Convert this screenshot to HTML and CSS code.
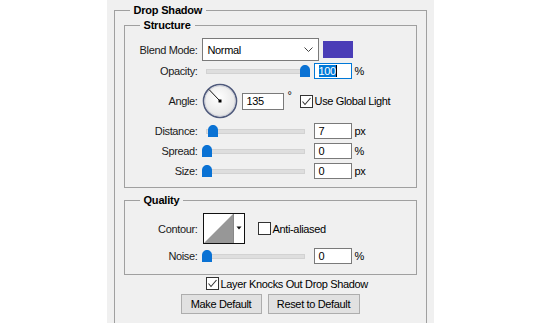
FILE: index.html
```html
<!DOCTYPE html>
<html lang="en">
<head>
    <meta charset="UTF-8">
    <meta name="viewport" content="width=device-width, initial-scale=1.0">
    <title>Layer Style - Drop Shadow</title>
    <link rel="stylesheet" href="styles.css">
</head>
<body>

<div class="panel">
    <fieldset class="group outer">
        <legend>Drop Shadow</legend>

        <!-- Structure -->
        <fieldset class="group">
            <legend>Structure</legend>

            <div class="row row-blend">
                <span class="label">Blend Mode:</span>
                <div class="select">
                    <span>Normal</span>
                    <svg class="chev" width="9" height="5" viewBox="0 0 9 5"><polyline points="0.5,0.5 4.5,4.5 8.5,0.5" fill="none" stroke="#444" stroke-width="1"/></svg>
                </div>
                <span class="swatch"></span>
            </div>

            <div class="row row-slider">
                <span class="label">Opacity:</span>
                <div class="slider">
                    <span class="track"></span>
                    <svg class="thumb" style="left: 98px" width="10" height="12" viewBox="0 0 10 12"><path d="M0 5 C0 2 2.5 0 5 0 C7.5 0 10 2 10 5 V12 H0 Z" fill="#0a72d4"/></svg>
                </div>
                <span class="field focused"><span class="selected">100</span><span class="caret"></span></span>
                <span class="unit">%</span>
            </div>

            <div class="row row-angle">
                <span class="label">Angle:</span>
                <svg class="dial" width="36" height="36" viewBox="0 0 36 36">
                    <defs>
                        <radialGradient id="dialFill" cx="45%" cy="40%" r="60%">
                            <stop offset="0%" stop-color="#ffffff"/>
                            <stop offset="100%" stop-color="#e4e4e4"/>
                        </radialGradient>
                    </defs>
                    <circle cx="18" cy="18" r="16.5" fill="url(#dialFill)" stroke="#4f5a7c" stroke-width="1.6"/>
                    <circle cx="18" cy="18" r="15.2" fill="none" stroke="#c9ccd6" stroke-width="0.8"/>
                    <line x1="18" y1="18" x2="7" y2="6.5" stroke="#111" stroke-width="1"/>
                    <rect x="16.5" y="16.5" width="3" height="3" fill="#000"/>
                </svg>
                <span class="field field-angle">135</span>
                <span class="degree">°</span>
                <label class="check check-global">
                    <svg width="13" height="13" viewBox="0 0 13 13"><rect x="0.5" y="0.5" width="12" height="12" fill="#fff" stroke="#333"/><polyline points="2.5,6.5 5,9.5 10.5,3" fill="none" stroke="#333" stroke-width="1.1"/></svg>
                    <span>Use Global Light</span>
                </label>
            </div>

            <div class="row row-slider">
                <span class="label">Distance:</span>
                <div class="slider">
                    <span class="track"></span>
                    <svg class="thumb" style="left: 6px" width="10" height="12" viewBox="0 0 10 12"><path d="M0 5 C0 2 2.5 0 5 0 C7.5 0 10 2 10 5 V12 H0 Z" fill="#0a72d4"/></svg>
                </div>
                <span class="field">7</span>
                <span class="unit">px</span>
            </div>

            <div class="row row-slider">
                <span class="label">Spread:</span>
                <div class="slider">
                    <span class="track"></span>
                    <svg class="thumb" style="left: 0px" width="10" height="12" viewBox="0 0 10 12"><path d="M0 5 C0 2 2.5 0 5 0 C7.5 0 10 2 10 5 V12 H0 Z" fill="#0a72d4"/></svg>
                </div>
                <span class="field">0</span>
                <span class="unit">%</span>
            </div>

            <div class="row row-slider">
                <span class="label">Size:</span>
                <div class="slider">
                    <span class="track"></span>
                    <svg class="thumb" style="left: 0px" width="10" height="12" viewBox="0 0 10 12"><path d="M0 5 C0 2 2.5 0 5 0 C7.5 0 10 2 10 5 V12 H0 Z" fill="#0a72d4"/></svg>
                </div>
                <span class="field">0</span>
                <span class="unit">px</span>
            </div>
        </fieldset>

        <!-- Quality -->
        <fieldset class="group quality">
            <legend>Quality</legend>

            <div class="row row-contour">
                <span class="label">Contour:</span>
                <svg class="contour" width="42" height="31" viewBox="0 0 42 31">
                    <rect x="0.5" y="0.5" width="41" height="30" fill="#fff" stroke="#111"/>
                    <polygon points="1,30 30,1 30,30" fill="#979797"/>
                    <line x1="30.5" y1="1" x2="30.5" y2="30" stroke="#888"/>
                    <polygon points="33.5,13.5 38.5,13.5 36,16.5" fill="#111"/>
                </svg>
                <label class="check check-anti">
                    <svg width="13" height="13" viewBox="0 0 13 13"><rect x="0.5" y="0.5" width="12" height="12" fill="#fff" stroke="#333"/></svg>
                    <span>Anti-aliased</span>
                </label>
            </div>

            <div class="row row-slider">
                <span class="label">Noise:</span>
                <div class="slider">
                    <span class="track"></span>
                    <svg class="thumb" style="left: 0px" width="10" height="12" viewBox="0 0 10 12"><path d="M0 5 C0 2 2.5 0 5 0 C7.5 0 10 2 10 5 V12 H0 Z" fill="#0a72d4"/></svg>
                </div>
                <span class="field">0</span>
                <span class="unit">%</span>
            </div>
        </fieldset>

        <label class="check check-knockout">
            <svg width="13" height="13" viewBox="0 0 13 13"><rect x="0.5" y="0.5" width="12" height="12" fill="#fff" stroke="#333"/><polyline points="2.5,6.5 5,9.5 10.5,3" fill="none" stroke="#333" stroke-width="1.1"/></svg>
            <span>Layer Knocks Out Drop Shadow</span>
        </label>

        <div class="buttons">
            <button class="btn btn-make">Make Default</button>
            <button class="btn btn-reset">Reset to Default</button>
        </div>
    </fieldset>
</div>

</body>
</html>
```

FILE: styles.css
```css
body {
    margin: 0;
    background-color: #ffffff;
    font-family: "Liberation Sans", Arial, sans-serif;
    font-size: 11px;
    letter-spacing: -0.35px;
    color: #1a1a1a;
}

.panel {
    width: 327px;
    height: 323px;
    margin: 0 auto;
    padding: 3px 7px 0;
    box-sizing: border-box;
    background-color: #f0f0f0;
    overflow: hidden;
}

/* group boxes */
.group {
    margin: 0;
    padding: 0 0 8px;
    min-width: 0;
    border: 1px solid #a0a0a0;
}

.group legend {
    margin-left: 15px;
    padding: 0 4px;
    font-weight: bold;
    line-height: 14px;
    letter-spacing: -0.2px;
    color: #000;
}

.outer {
    padding: 1px 9px 0;
    border-bottom: none;
    height: 400px;
}

.outer > legend {
    margin-left: 6px;
}

.quality {
    margin-top: 5px;
    padding-bottom: 10px;
}

/* rows */
.row {
    display: flex;
    align-items: center;
    gap: 4px;
    margin-top: 4px;
}

.label {
    width: 73px;
    text-align: right;
    flex: none;
}

.row-blend {
    height: 23px;
    margin-top: 6px;
}

.row-blend + .row {
    margin-top: 2px;
}

.row-slider {
    height: 16px;
}

.row-angle {
    height: 36px;
}

.row-contour {
    height: 31px;
    margin-top: 6px;
}

/* blend select */
.select {
    width: 117px;
    height: 23px;
    box-sizing: border-box;
    display: flex;
    align-items: center;
    justify-content: space-between;
    padding: 0 5px 0 5px;
    background-color: #fff;
    border: 1px solid #7a7a7a;
    color: #000;
}

.swatch {
    width: 30px;
    height: 17px;
    background-color: #4a3db7;
}

/* sliders */
.slider {
    position: relative;
    width: 108px;
    height: 16px;
    display: flex;
    align-items: center;
    flex: none;
}

.track {
    flex: 1;
    height: 3px;
    margin: 1px 5px 0 4px;
    background-color: #dedede;
    border: 1px solid #d2d2d2;
}

.thumb {
    position: absolute;
    top: 2px;
}

/* number fields */
.field {
    width: 38px;
    height: 16px;
    box-sizing: border-box;
    padding-left: 4px;
    line-height: 14px;
    background-color: #fff;
    border: 1px solid #7a7a7a;
    color: #000;
    display: flex;
    align-items: center;
    flex: none;
}

.field-angle {
    width: 42px;
    height: 17px;
    line-height: 15px;
}

.focused {
    border-color: #0078d7;
}

.selected {
    background-color: #0078d7;
    color: #fff;
    line-height: 12px;
}

.caret {
    width: 1px;
    height: 12px;
    background-color: #000;
}

.unit {
    margin-left: -1px;
    color: #000;
}

.degree {
    align-self: flex-start;
    margin-top: 6px;
    color: #000;
}

/* check boxes */
.check {
    display: flex;
    align-items: center;
    gap: 2px;
    color: #000;
}

.check svg {
    flex: none;
}

.check-global {
    margin-left: 4px;
}

.contour {
    margin-left: 1px;
}

.check-anti {
    margin-left: 9px;
}

.check-knockout {
    height: 13px;
    margin: 2px 0 0 82px;
}

/* buttons */
.buttons {
    display: flex;
    justify-content: center;
    gap: 6px;
    margin-top: 4px;
}

.btn {
    height: 20px;
    padding: 0;
    font-family: inherit;
    font-size: 11px;
    letter-spacing: -0.35px;
    color: #000;
    background-color: #e1e1e1;
    border: 1px solid #adadad;
}

.btn-make {
    width: 81px;
}

.btn-reset {
    width: 92px;
}
```
